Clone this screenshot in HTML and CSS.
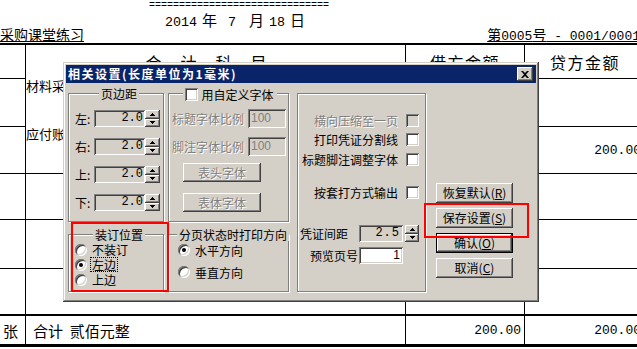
FILE: index.html
```html
<!DOCTYPE html>
<html lang="zh-CN">
<head>
<meta charset="utf-8">
<title>相关设置</title>
<link rel="stylesheet" href="styles.css">
</head>
<body>
<div class="page">
  <div class="rule">==============================</div>
  <div class="date"><span class="n">2014</span><span class="c">年</span><span class="n">7</span><span class="c">月</span><span class="n">18</span><span class="c">日</span></div>
  <div class="meta"><span class="u">采购课堂练习</span><span class="u">第<span class="n">0005</span>号<span class="n"> - 0001/0001</span></span></div>
  <table class="vt">
    <colgroup><col class="ca"><col class="cb2"><col class="cc"><col class="cd"></colgroup>
    <tr class="hd"><td></td><td class="th-acct">会计科目</td><td class="th-amt">借方金额</td><td class="th-amt th-last">贷方金额</td></tr>
    <tr class="r r1"><td></td><td class="acct nb">材料采购</td><td class="amt">200.00</td><td class="amt last"></td></tr>
    <tr class="r r2"><td></td><td class="acct nb">应付账款</td><td class="amt"></td><td class="amt last">200.00</td></tr>
    <tr class="r r3"><td></td><td></td><td></td><td></td></tr>
    <tr class="r r4"><td></td><td></td><td></td><td></td></tr>
    <tr class="r r5"><td></td><td></td><td></td><td></td></tr>
    <tr class="tot"><td class="att">张</td><td class="sum">合计&nbsp;&nbsp;贰佰元整</td><td class="amt">200.00</td><td class="amt last">200.00</td></tr>
  </table>
</div>

<div class="dialog">
  <div class="titlebar">
    <span class="ttl">相关设置(长度单位为1毫米)</span>
    <span class="close raised"><svg width="8" height="7" viewBox="0 0 8 7"><path d="M0 0h2l2 2 2-2h2L5 3.5 8 7H6L4 5 2 7H0l3-3.5z" fill="#000"/></svg></span>
  </div>
  <div class="dbody">
    <div class="grp g-margin">
      <div class="gt">页边距</div>
      <div class="mrow"><span class="ml">左:</span><span class="fld ro sunken">2.0</span><span class="spin"><span class="sb raised"><svg class="ar" width="5" height="3" viewBox="0 0 5 3"><path d="M2 0h1v1h1v1h1v1H0V2h1V1h1z"/></svg></span><span class="sb raised"><svg class="ar" width="5" height="3" viewBox="0 0 5 3"><path d="M0 0h5v1H4v1H3v1H2V2H1V1H0z"/></svg></span></span></div>
      <div class="mrow"><span class="ml">右:</span><span class="fld ro sunken">2.0</span><span class="spin"><span class="sb raised"><svg class="ar" width="5" height="3" viewBox="0 0 5 3"><path d="M2 0h1v1h1v1h1v1H0V2h1V1h1z"/></svg></span><span class="sb raised"><svg class="ar" width="5" height="3" viewBox="0 0 5 3"><path d="M0 0h5v1H4v1H3v1H2V2H1V1H0z"/></svg></span></span></div>
      <div class="mrow"><span class="ml">上:</span><span class="fld ro sunken">2.0</span><span class="spin"><span class="sb raised"><svg class="ar" width="5" height="3" viewBox="0 0 5 3"><path d="M2 0h1v1h1v1h1v1H0V2h1V1h1z"/></svg></span><span class="sb raised"><svg class="ar" width="5" height="3" viewBox="0 0 5 3"><path d="M0 0h5v1H4v1H3v1H2V2H1V1H0z"/></svg></span></span></div>
      <div class="mrow"><span class="ml">下:</span><span class="fld ro sunken">2.0</span><span class="spin"><span class="sb raised"><svg class="ar" width="5" height="3" viewBox="0 0 5 3"><path d="M2 0h1v1h1v1h1v1H0V2h1V1h1z"/></svg></span><span class="sb raised"><svg class="ar" width="5" height="3" viewBox="0 0 5 3"><path d="M0 0h5v1H4v1H3v1H2V2H1V1H0z"/></svg></span></span></div>
    </div>

    <div class="grp g-font">
      <div class="gt gt-cb"><span class="cb sunken"></span><span>用自定义字体</span></div>
      <div class="frow f1"><span class="fl dis">标题字体比例</span><span class="fld dfld sunken">100</span></div>
      <div class="frow f2"><span class="fl dis">脚注字体比例</span><span class="fld dfld sunken">100</span></div>
      <div class="btn dbtn b1 raised"><span class="dis">表头字体</span></div>
      <div class="btn dbtn b2 raised"><span class="dis">表体字体</span></div>
    </div>

    <div class="grp g-opts">
      <div class="crow c1"><span class="dis">横向压缩至一页</span><span class="cb cbd sunken"></span></div>
      <div class="crow c2"><span>打印凭证分割线</span><span class="cb sunken"></span></div>
      <div class="crow c3"><span>标题脚注调整字体</span><span class="cb sunken"></span></div>
      <div class="crow c4"><span>按套打方式输出</span><span class="cb sunken"></span></div>
      <div class="srow s1"><span>凭证间距</span><span class="fld ro gap sunken">2.5</span><span class="spin sp2"><span class="sb raised"><svg class="ar" width="5" height="3" viewBox="0 0 5 3"><path d="M2 0h1v1h1v1h1v1H0V2h1V1h1z"/></svg></span><span class="sb raised"><svg class="ar" width="5" height="3" viewBox="0 0 5 3"><path d="M0 0h5v1H4v1H3v1H2V2H1V1H0z"/></svg></span></span></div>
      <div class="srow s2"><span class="pl">预览页号</span><span class="fld wf sunken">1</span><span class="spacer"></span></div>
    </div>

    <div class="btns">
      <div class="btn raised">恢复默认(<u>R</u>)</div>
      <div class="btn raised">保存设置(<u>S</u>)</div>
      <div class="btn def">确认(<u>O</u>)</div>
      <div class="btn raised">取消(<u>C</u>)</div>
    </div>

    <div class="grp g-bind">
      <div class="gt">装订位置</div>
      <div class="rrow"><span class="radio"></span><span class="rl">不装订</span></div>
      <div class="rrow"><span class="radio on"></span><span class="rl focus">左边</span></div>
      <div class="rrow"><span class="radio"></span><span class="rl">上边</span></div>
    </div>

    <div class="grp g-dir">
      <div class="gt">分页状态时打印方向</div>
      <div class="rrow d1"><span class="radio on"></span><span>水平方向</span></div>
      <div class="rrow d2"><span class="radio"></span><span>垂直方向</span></div>
    </div>
  </div>
  <div class="mark mark-bind"></div>
  <div class="mark mark-save"></div>
</div>
</body>
</html>
```

FILE: styles.css
```css
* { box-sizing: border-box; margin: 0; padding: 0; }
html, body { overflow: hidden; background: #fff; }
body {
  width: 637px; height: 349px; position: relative;
  font-family: "Noto Sans CJK SC", "Liberation Sans", sans-serif;
  font-size: 12px; color: #000;
}

/* ---------- voucher page ---------- */
.page { width: 645px; }
.rule {
  height: 12px; padding-left: 149px;
  font-family: "Liberation Mono", monospace; font-size: 10px; line-height: 12px;
  overflow: hidden; white-space: nowrap;
}
.date {
  height: 15px; padding-left: 165px; display: flex; align-items: baseline;
  font-size: 15px; line-height: 15px;
}
.date .n { font-family: "Liberation Mono", monospace; font-size: 13.33px; }
.date .c:nth-child(2) { margin-left: 5px; }
.date .n:nth-child(3) { margin-left: 11px; }
.date .c:nth-child(4) { margin-left: 13px; }
.date .n:nth-child(5) { margin-left: 5px; }
.date .c:nth-child(6) { margin-left: 5px; }
.meta {
  height: 16px; display: flex; justify-content: space-between;
  font-size: 14px; line-height: 15px; padding-right: 5px;
}
.meta .n { font-family: "Liberation Mono", monospace; font-size: 13px; white-space: pre; }
.u { text-decoration: underline; text-underline-offset: 1px; }

.vt {
  border-collapse: separate; border-spacing: 0; table-layout: fixed; width: 645px;
  border-top: 2px solid #000; border-bottom: 3px solid #000;
}
.ca { width: 25px; }
.cb2 { width: 380px; }
.cc { width: 119px; }
.cd { width: 121px; }
.vt td { padding: 0; border-left: 1px solid #000; border-top: 1px solid #000; vertical-align: top; overflow: hidden; white-space: nowrap; }
.vt td:first-child { border-left: none; }
.vt .hd td { border-top: none; height: 33px; vertical-align: middle; font-size: 16px; text-align: center; }
.th-acct { letter-spacing: 19px; padding-left: 19px; }
.th-amt { letter-spacing: 1.5px; }
.th-last { padding-right: 8px; }
.r1 td { height: 48px; }
.r2 td { height: 47px; }
.r3 td { height: 46px; }
.r4 td { height: 49px; }
.r5 td { height: 46px; }
.vt td.nb { border-top: none; }
.acct { font-size: 13px; line-height: 15px; }
.vt .amt { vertical-align: middle; text-align: right; padding-right: 3px; font-family: "Liberation Mono", monospace; font-size: 13px; }
.vt .amt.last { padding-right: 4px; }
.tot td { height: 30px; border-top-width: 2px; vertical-align: middle; font-size: 15px; }
.vt .att { padding-left: 3px; }
.vt .sum { padding-left: 7px; }

/* ---------- classic controls ---------- */
.raised { background: #d4d0c8; box-shadow: inset -1px -1px #404040, inset 1px 1px #fff, inset -2px -2px #808080, inset 2px 2px #d4d0c8; }
.sunken { box-shadow: inset 1px 1px #808080, inset -1px -1px #fff, inset 2px 2px #404040, inset -2px -2px #d4d0c8; }
.dis { color: #808080; text-shadow: 1px 1px 0 #fff; }

.dialog {
  position: absolute; left: 63px; top: 62px; width: 476px; height: 240px;
  background: #d4d0c8; padding: 3px;
  box-shadow: inset -1px -1px #404040, inset 1px 1px #d4d0c8, inset -2px -2px #808080, inset 2px 2px #fff;
}
.titlebar {
  height: 18px; background: #0a246a; color: #fff;
  display: flex; align-items: center; justify-content: space-between; padding: 0 3px 0 2px;
}
.ttl { font-weight: bold; font-size: 12px; line-height: 14px; letter-spacing: 1.5px; }
.close { width: 16px; height: 14px; display: flex; align-items: center; justify-content: center; }

.dbody {
  display: grid;
  grid-template-columns: 96px 4px 121px 8px 129px 10px 77px;
  grid-template-rows: 129px 58px;
  row-gap: 12px;
  padding: 10px 0 0 2px;
}
.grp {
  border: 1px solid #808080;
  box-shadow: 1px 1px 0 #fff, inset 1px 1px 0 #fff;
  display: flex; flex-direction: column;
}
.gt {
  align-self: center; margin-top: -7px; height: 13px; line-height: 13px;
  padding: 0 2px; background: #d4d0c8; white-space: nowrap;
}
.g-margin { grid-column: 1; grid-row: 1; padding-left: 6px; }
.g-font { grid-column: 3; grid-row: 1; padding-left: 3px; }
.g-opts { grid-column: 5; grid-row: 1 / span 2; padding: 0 6px 0 1px; }
.btns { grid-column: 7; grid-row: 1 / span 2; display: flex; flex-direction: column; gap: 5px; padding-top: 90px; }
.g-bind { grid-column: 1; grid-row: 2; padding-left: 6px; }
.g-dir { grid-column: 3; grid-row: 2; padding-left: 9px; }

/* margins group */
.mrow { display: flex; align-items: center; height: 17px; margin-top: 11px; }
.g-margin .gt + .mrow { margin-top: 10px; }
.ml { width: 19px; line-height: 17px; }
.fld {
  height: 17px; line-height: 17px; background: #d4d0c8;
  font-family: "Liberation Mono", monospace; font-size: 12px; text-align: right; padding-right: 2px;
  white-space: nowrap;
}
.fld.ro { width: 51px; }
.spin { display: flex; flex-direction: column; width: 15px; height: 17px; }
.sb { flex: 1; display: flex; align-items: center; justify-content: center; }
.ar { display: block; fill: #000; }

/* font group */
.gt-cb { display: flex; align-items: center; gap: 3px; height: 14px; padding: 0 3px 0 2px; margin-top: -7px; }
.cb { width: 13px; height: 13px; background: #fff; flex: none; }
.cb.cbd { background: #d4d0c8; }
.frow { display: flex; align-items: center; height: 19px; }
.frow.f1 { margin-top: 8px; }
.frow.f2 { margin-top: 9px; }
.fl { width: 76px; white-space: nowrap; }
.dfld { width: 38px; height: 19px; line-height: 19px; text-align: left; padding-left: 3px; color: #808080; font-family: "Liberation Sans", sans-serif; }
.btn {
  height: 20px; width: 77px; display: flex; align-items: center; justify-content: center;
  white-space: nowrap; line-height: 14px;
}
.btn u { text-decoration: underline; text-underline-offset: 1px; }
.dbtn { width: 78px; height: 19px; margin-left: 11px; }
.dbtn.b1 { margin-top: 7px; }
.dbtn.b2 { margin-top: 11px; }
.btn.def {
  background: #d4d0c8; border: 1px solid #000;
  box-shadow: inset -1px -1px #404040, inset 1px 1px #fff, inset -2px -2px #808080;
}

/* options group */
.crow { display: flex; justify-content: flex-end; align-items: center; gap: 8px; height: 13px; white-space: nowrap; }
.crow.c1 { margin-top: 20px; }
.crow.c2 { margin-top: 6px; }
.crow.c3 { margin-top: 7px; }
.crow.c4 { margin-top: 20px; }
.srow { display: flex; align-items: center; height: 17px; white-space: nowrap; }
.srow.s1 { margin-top: 26px; padding-left: 1px; }
.srow.s2 { margin-top: 5px; justify-content: flex-end; }
.fld.gap { width: 44px; margin-left: auto; padding-right: 3px; letter-spacing: 1px; }
.sp2 { width: 14px; margin-left: 2px; }
.pl { margin-right: 1px; }
.fld.wf { width: 44px; background: #fff; padding-right: 3px; font-family: "Liberation Sans", sans-serif; }
.spacer { width: 16px; flex: none; }

/* radio groups */
.rrow { display: flex; align-items: center; gap: 4px; height: 15px; white-space: nowrap; }
.g-bind .gt + .rrow { margin-top: 1px; }
.radio {
  width: 12px; height: 12px; border-radius: 50%; background: #fff; flex: none;
  box-shadow: inset 1px 1px #808080, inset -1px -1px #fff, inset 2px 2px #404040, inset -2px -2px #d4d0c8;
  display: flex; align-items: center; justify-content: center;
}
.radio.on::after { content: ""; width: 4px; height: 4px; border-radius: 50%; background: #000; }
.rl { padding: 0 1px; line-height: 13px; }
.rl.focus { outline: 1px dotted #000; }
.g-dir .rrow { height: 16px; gap: 5px; }
.g-dir .d1 { margin-top: 1px; }
.g-dir .d2 { margin-top: 6px; }

/* annotation marks */
.mark { position: absolute; border: 2px solid #f00; }
.mark-bind { left: 8px; top: 160px; width: 98px; height: 70px; }
.mark-save { left: 361px; top: 141px; width: 105px; height: 35px; }
```
